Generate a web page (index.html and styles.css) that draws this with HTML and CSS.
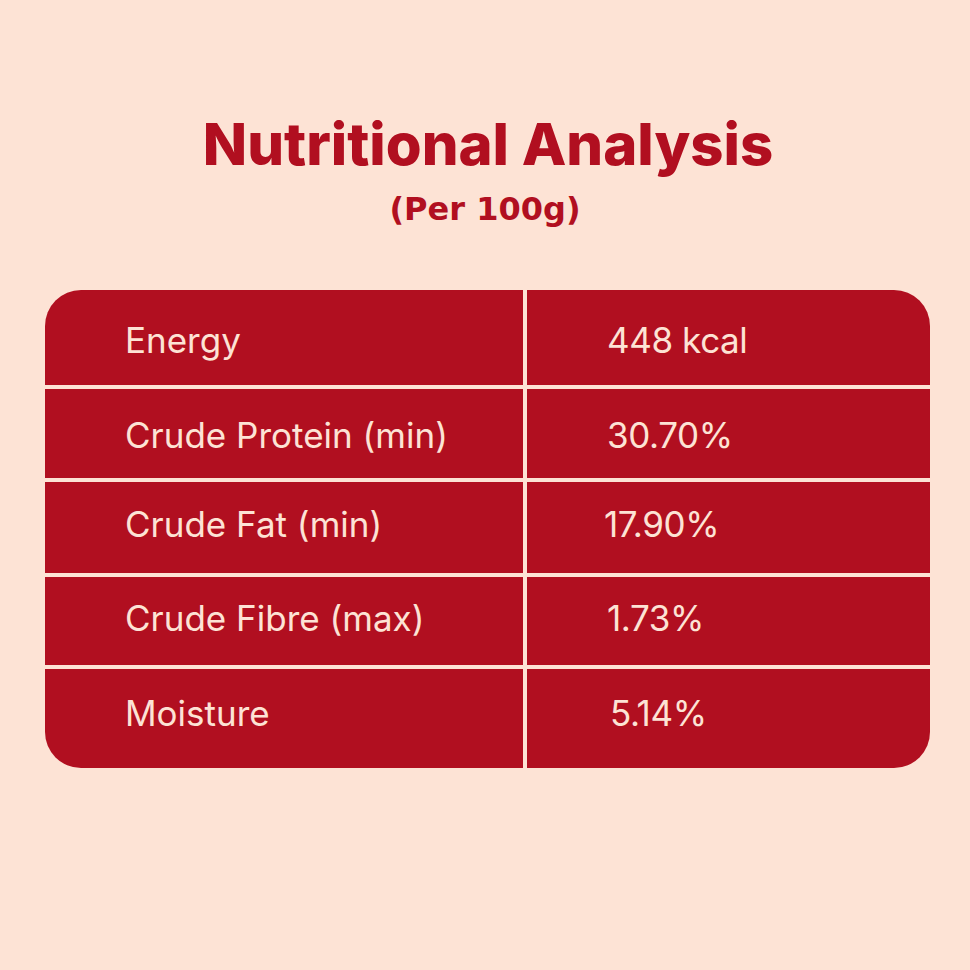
FILE: index.html
```html
<!DOCTYPE html>
<html lang="en">
<head>
<meta charset="utf-8">
<title>Nutritional Analysis</title>
<link rel="stylesheet" href="styles.css">
</head>
<body>
<main class="page">
  <header class="head">
    <h1 class="title">Nutritional Analysis</h1>
    <p class="subtitle">(Per 100g)</p>
  </header>
  <section class="table">
    <div class="cell label r1">Energy</div>
    <div class="cell value r1">448 kcal</div>
    <div class="cell label r2">Crude Protein (min)</div>
    <div class="cell value r2">30.70%</div>
    <div class="cell label r3">Crude Fat (min)</div>
    <div class="cell value r3 tight">17.90%</div>
    <div class="cell label r4">Crude Fibre (max)</div>
    <div class="cell value r4">1.73%</div>
    <div class="cell label r5">Moisture</div>
    <div class="cell value r5 wide">5.14%</div>
  </section>
</main>
</body>
</html>
```

FILE: styles.css
```css
* { box-sizing: border-box; }
html, body { margin: 0; padding: 0; }
body {
  background: #fde3d5;
  font-family: "Inter", "Lato", sans-serif;
}
.page {
  width: 970px;
  height: 970px;
  padding-top: 109px;
  background: #fde3d5;
}
.head {
  text-align: center;
  color: #b10f20;
}
.title {
  margin: 0;
  padding-left: 6px;
  font-family: "Inter", sans-serif;
  font-size: 58px;
  font-weight: 800;
  line-height: 70px;
  letter-spacing: 0;
}
.subtitle {
  margin: 10px 0 0;
  font-family: "DejaVu Sans", sans-serif;
  font-size: 32px;
  font-weight: 700;
  line-height: 40px;
}
.table {
  margin: 61px 0 0 45px;
  width: 885px;
  display: grid;
  grid-template-columns: 478px 403px;
  grid-template-rows: 95px 89px 91px 88px 99px;
  gap: 4px;
  border-radius: 36px;
  overflow: hidden;
  background: #fde3d5;
}
.cell {
  background: #b10f20;
  color: #fde3d5;
  font-size: 35px;
  font-weight: 400;
  display: flex;
  align-items: center;
}
.label { padding-left: 80px; }
.value { padding-left: 80px; letter-spacing: -0.4px; }
.value.tight { padding-left: 77px; }
.value.wide { padding-left: 83px; }
.r1 { padding-top: 5px; }
.r2 { padding-top: 3px; }
.r3 { padding-bottom: 7px; }
.r4 { padding-bottom: 6px; }
.r5 { padding-bottom: 11px; }
```
